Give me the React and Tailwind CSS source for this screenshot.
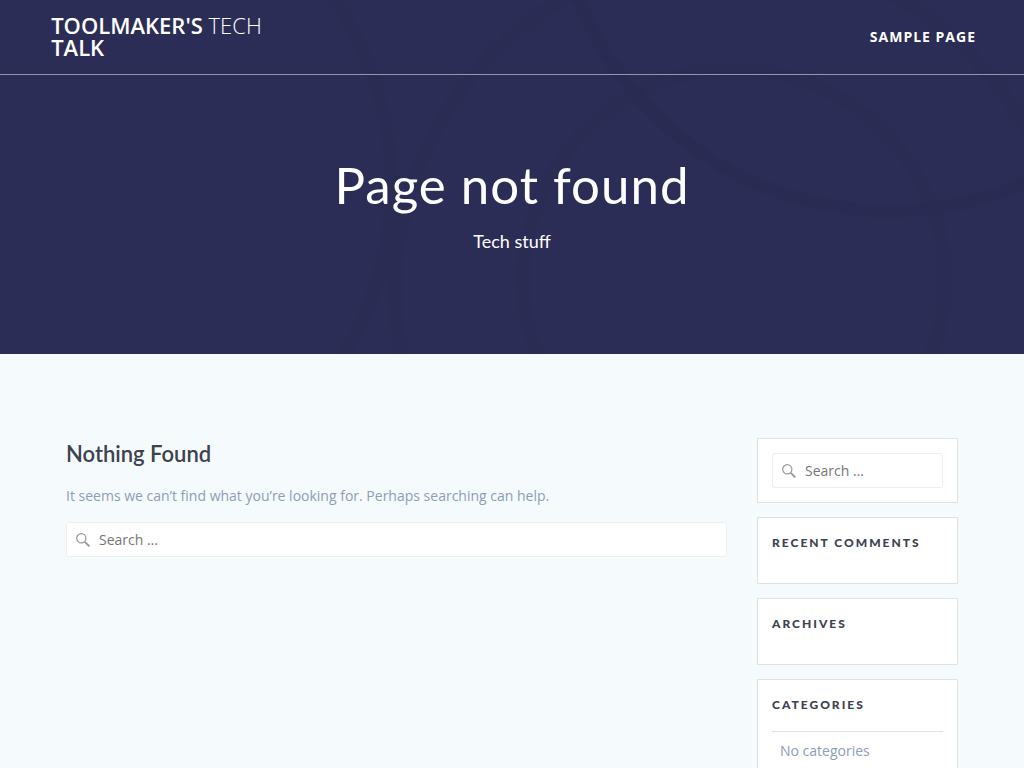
import React from 'react';

function SearchIcon() {
  return (
    <svg
      viewBox="0 0 14 14"
      className="pointer-events-none absolute top-1/2 left-2.5 h-3.5 w-3.5 -translate-y-1/2 text-[#969696]"
      fill="none"
      stroke="currentColor"
      aria-hidden="true"
    >
      <circle cx="5.3" cy="5.3" r="4.6" strokeWidth="1.2" />
      <path d="M8.8 8.8 L13.4 13.4" strokeWidth="1.8" />
    </svg>
  );
}

function SearchForm() {
  return (
    <form role="search" className="relative" onSubmit={(e) => e.preventDefault()}>
      <SearchIcon />
      <input
        type="search"
        aria-label="Search for:"
        placeholder="Search …"
        className="block h-[35px] w-full rounded-[3px] border border-[#eeeeee] bg-white pr-2 pl-8 text-sm text-[#757575] placeholder:text-[#757575]"
      />
    </form>
  );
}

function Widget({ title, children }) {
  return (
    <section className="border border-[#dee2e2] bg-white p-3.5">
      {title && (
        <h2 className="mb-3 h-[25px] pt-px font-['Lato',sans-serif] text-xs leading-5 font-black tracking-[2px] text-[#3c424f] uppercase">
          {title}
        </h2>
      )}
      {children}
    </section>
  );
}

// Faint overlapping rings behind the hero text
function HeroRings() {
  return (
    <svg
      viewBox="0 0 1024 354"
      preserveAspectRatio="xMidYMin slice"
      className="absolute inset-0 h-full w-full"
      fill="none"
      stroke="#292a50"
      strokeWidth="13"
      aria-hidden="true"
    >
      <circle cx="734" cy="280" r="211" strokeOpacity="0.35" />
      <circle cx="890" cy="-124" r="335" strokeOpacity="0.45" />
      <circle cx="731" cy="290" r="336" strokeOpacity="0.35" />
      <circle cx="58" cy="185" r="333" strokeOpacity="0.3" />
    </svg>
  );
}

function Header() {
  return (
    <header className="relative bg-[#2b2d56] text-white">
      <HeroRings />
      <div className="relative">
        <nav className="flex items-center justify-between border-b border-[#9596aa] pr-12 pl-[5%]">
          <a href="#" className="w-56 pt-3.5 pb-4 text-[22px] leading-[22px] font-semibold uppercase">
            Toolmaker's <span className="font-light">Tech</span> Talk
          </a>
          <a href="#" className="text-sm font-bold tracking-[1px] uppercase">
            Sample Page
          </a>
        </nav>
        <div className="px-4 pt-20 pb-[99px] text-center font-['Lato',sans-serif]">
          <h1 className="text-[51px] leading-[60px] font-normal tracking-[1px]">Page not found</h1>
          <p className="mt-3 text-lg leading-7">Tech stuff</p>
        </div>
      </div>
    </header>
  );
}

function App() {
  return (
    <div className="min-h-screen bg-[#f5fafd] font-['Open_Sans',sans-serif] text-[#8e9db4]">
      <Header />
      <main className="mx-auto flex max-w-[1232px] items-start gap-[30px] px-[66px] pt-[84px]">
        <div className="min-w-0 flex-1">
          <h2 className="font-['Lato',sans-serif] text-[22px] leading-8 font-semibold text-[#3c424f]">
            Nothing Found
          </h2>
          <p className="my-3 text-sm leading-7">
            It seems we can’t find what you’re looking for. Perhaps searching can help.
          </p>
          <SearchForm />
        </div>
        <aside className="flex w-[201px] shrink-0 flex-col gap-3.5">
          <Widget>
            <SearchForm />
          </Widget>
          <Widget title="Recent Comments" />
          <Widget title="Archives" />
          <Widget title="Categories">
            <ul className="border-t border-[#dee2e2] px-2 py-[5px] text-sm leading-7">
              <li>No categories</li>
            </ul>
          </Widget>
        </aside>
      </main>
    </div>
  );
}

export default App;
